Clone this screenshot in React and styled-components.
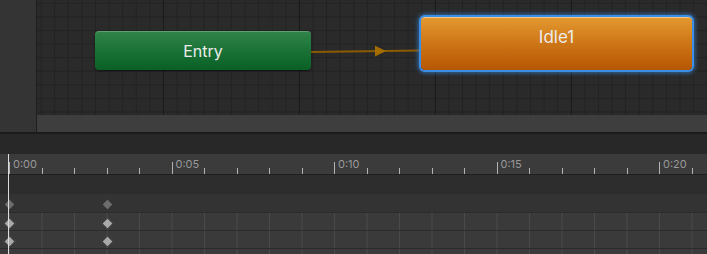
import React from 'react';
import styled, { createGlobalStyle, css } from 'styled-components';

const GlobalStyle = createGlobalStyle`
  html, body {
    margin: 0;
    padding: 0;
    background: #282828;
    overflow: hidden;
  }
  body {
    font-family: Inter, "Noto Sans", "Liberation Sans", sans-serif;
  }
`;

const Page = styled.div`
  width: 707px;
  height: 254px;
  display: flex;
  flex-direction: column;
  overflow: hidden;
  background: #282828;
`;

const GraphPane = styled.div`
  display: flex;
  height: 132px;
  flex: 0 0 auto;
`;

const Sidebar = styled.div`
  width: 36px;
  background: #343434;
  border-right: 1px solid #1e1e1e;
`;

const GraphMain = styled.div`
  flex: 1;
  display: flex;
  flex-direction: column;
`;

const Canvas = styled.div`
  position: relative;
  height: 115px;
  flex: 0 0 auto;
  background-color: #2a2a2a;
  background-image:
    linear-gradient(to right, #1a1a1a 1px, transparent 1px),
    linear-gradient(to right, #222222 1px, transparent 1px),
    linear-gradient(to bottom, #222222 1px, transparent 1px);
  background-size: 136px 100%, 13.6px 100%, 100% 13.6px;
  background-position: 126px 0, 3.6px 0, 0 2.8px;
`;

const ScrollBar = styled.div`
  flex: 1;
  background: #3e3e3e;
`;

const Divider = styled.div`
  flex: 0 0 2px;
  background: #1b1b1b;
`;

const Band = styled.div`
  flex: 0 0 ${p => p.$h}px;
  background: ${p => p.$bg};
`;

const nodeBase = css`
  position: absolute;
  box-sizing: border-box;
  border-radius: 4px;
  color: #ececec;
  display: flex;
  justify-content: center;
  font-weight: 400;
`;

const EntryNode = styled.div`
  ${nodeBase};
  left: 58px;
  top: 31px;
  width: 216px;
  height: 39px;
  align-items: center;
  font-size: 16px;
  background: linear-gradient(to bottom, #30834a 0%, #1a7236 50%, #0a6024 100%);
  border-top: 1px solid #5f9e70;
  box-shadow: 0 1px 2px rgba(0, 0, 0, 0.55);
`;

const StateNode = styled.div`
  ${nodeBase};
  left: 384px;
  top: 17px;
  width: 271px;
  height: 53px;
  align-items: flex-start;
  padding-top: 9px;
  font-size: 17px;
  background: linear-gradient(to bottom, #e3982f 0%, #cd7516 50%, #b65603 100%);
  border-top: 1px solid #f1c88c;
  box-shadow:
    0 0 0 2px #3a8ee6,
    0 0 4px 3px rgba(55, 140, 230, 0.65);
`;

const Wire = styled.svg`
  position: absolute;
  left: 0;
  top: 0;
  width: 100%;
  height: 100%;
  pointer-events: none;
`;

const Timeline = styled.div`
  position: relative;
  flex: 1 1 auto;
  min-height: 0;
  display: flex;
  flex-direction: column;
  overflow: hidden;
`;

const Ruler = styled.div`
  flex: 0 0 20px;
  display: flex;
  padding-left: 9px;
  background: #3b3b3b;
  border-bottom: 1px solid #1e1e1e;
  overflow: hidden;
`;

const Segment = styled.div`
  flex: 0 0 32.5px;
  display: flex;
  align-items: flex-start;
  height: 100%;
`;

const Tick = styled.div`
  align-self: flex-end;
  width: 1px;
  height: ${p => (p.$major ? 12 : 6)}px;
  background: #b4b4b4;
`;

const Label = styled.span`
  margin-top: 4px;
  margin-left: 3px;
  font-size: 11px;
  line-height: 13px;
  color: #999999;
  white-space: nowrap;
`;

const Track = styled.div`
  position: relative;
  flex: 0 0 ${p => p.$h}px;
  box-sizing: border-box;
  ${p => p.$summary
    ? css`
      background: #333333;
    `
    : css`
      border-top: 1px solid #2b2b2b;
      background-color: #3a3a3a;
      background-image: linear-gradient(to right, #4a4a4a 1px, transparent 1px);
      background-size: 32.5px 100%;
      background-position: 9px 0;
    `}
`;

const Key = styled.div`
  position: absolute;
  top: 50%;
  width: 7px;
  height: 7px;
  margin-top: -3px;
  margin-left: -4px;
  transform: rotate(45deg);
  background: ${p => (p.$dim ? '#6d6d6d' : '#a9a9a9')};
  border: 1px solid #262626;
`;

const Playhead = styled.div`
  position: absolute;
  left: 8px;
  top: 0;
  bottom: 0;
  width: 1px;
  background: #dcdcdc;
`;

const SEC = 32.5;
const ORIGIN = 9;
const seconds = Array.from({ length: 22 }, (_, i) => i);
const tracks = [
  { h: 18, summary: true, keys: [0, 3] },
  { h: 18, keys: [0, 3] },
  { h: 18, keys: [0, 3] },
  { h: 18, keys: [] },
];

export default function App() {
  return (
    <>
      <GlobalStyle />
      <Page>
        <GraphPane>
          <Sidebar />
          <GraphMain>
            <Canvas>
              <Wire viewBox="0 0 670 115">
                <line x1="274" y1="52" x2="384" y2="50.5" stroke="#8a5b00" strokeWidth="2" />
                <polygon points="338,45.8 349,51.1 338,56.6" fill="#a56c00" />
              </Wire>
              <EntryNode>Entry</EntryNode>
              <StateNode>Idle1</StateNode>
            </Canvas>
            <ScrollBar />
          </GraphMain>
        </GraphPane>
        <Divider />
        <Band $h={20} $bg="#282828" />
        <Timeline>
          <Ruler>
            {seconds.map(s => (
              <Segment key={s}>
                <Tick $major={s % 5 === 0} />
                {s % 5 === 0 && <Label>{`0:${String(s).padStart(2, '0')}`}</Label>}
              </Segment>
            ))}
          </Ruler>
          <Band $h={19} $bg="#2d2d2d" />
          {tracks.map((t, i) => (
            <Track key={i} $h={t.h} $summary={t.summary}>
              {t.keys.map(k => (
                <Key key={k} $dim={t.summary} style={{ left: ORIGIN + k * SEC }} />
              ))}
            </Track>
          ))}
          <Playhead />
        </Timeline>
      </Page>
    </>
  );
}
